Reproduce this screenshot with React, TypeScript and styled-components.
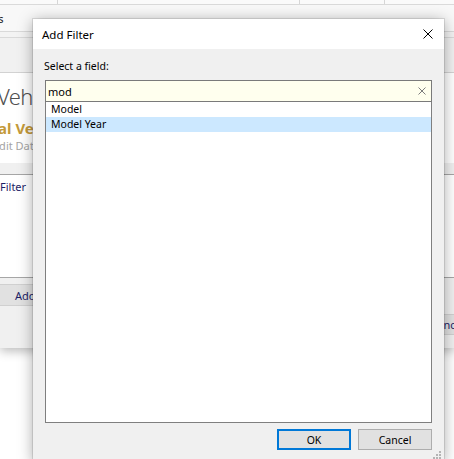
import React from 'react';
import styled, { createGlobalStyle } from 'styled-components';

const GlobalStyle = createGlobalStyle`
  html, body {
    margin: 0;
    padding: 0;
    background: #ffffff;
  }
  body {
    font-family: "Noto Sans", "Open Sans", sans-serif;
    color: #000000;
  }
`;

const Desktop = styled.div`
  position: relative;
  width: 454px;
  height: 459px;
  overflow: hidden;
  background: #ffffff;
`;

/* the window that sits behind the dialog */
const BackWindow = styled.div`
  position: absolute;
  left: 0;
  top: 0;
  width: 454px;
  height: 348px;
  display: flex;
  flex-direction: column;
  background: #f0f0f0;
  box-shadow: 0 3px 10px rgba(0, 0, 0, 0.28);
`;

const HeaderStrip = styled.div`
  height: 4px;
  flex: none;
  display: grid;
  grid-template-columns: 58px 242px 85px 1fr;
  background: #fafafa;
  border-bottom: 1px solid #dadada;
`;

const HeaderCell = styled.div`
  border-right: 1px solid #d6d6d6;
  &:last-child {
    border-right: none;
  }
`;

const Toolbar = styled.div`
  height: 26px;
  flex: none;
  display: flex;
  align-items: center;
  background: #f8f8f8;
  border-bottom: 1px solid #d9d9d9;
  font-size: 11px;
  color: #222;
`;

const Shift = styled.span<{ $by: number }>`
  margin-left: ${p => p.$by}px;
  white-space: nowrap;
`;

const SubBar = styled.div`
  height: 5px;
  flex: none;
  background: #f3f3f3;
  border-bottom: 1px solid #d9d9d9;
`;

const Ribbon = styled.div`
  height: 34px;
  flex: none;
  background: #f1f1f1;
  border-bottom: 1px solid #d2d2d2;
`;

const Content = styled.div`
  height: 90px;
  flex: none;
  box-sizing: border-box;
  padding-top: 9px;
  display: flex;
  flex-direction: column;
  background: #ffffff;
  white-space: nowrap;
`;

const PageTitle = styled.div`
  font-size: 22px;
  line-height: 28px;
  font-weight: 300;
  letter-spacing: -0.6px;
  color: #505050;
`;

const SectionTitle = styled.div`
  margin-top: 8px;
  font-size: 15px;
  line-height: 20px;
  font-weight: 700;
  color: #c49a3a;
`;

const Hint = styled.div`
  font-size: 11px;
  line-height: 15px;
  color: #a4a4a4;
`;

const GridHeader = styled.div`
  height: 11px;
  flex: none;
  background: #f0f0f0;
  border-bottom: 1px solid #a6a6a6;
`;

const FilterArea = styled.div`
  height: 103px;
  flex: none;
  box-sizing: border-box;
  padding-top: 4px;
  background: #ffffff;
  border-bottom: 1px solid #a6a6a6;
  font-size: 11px;
  line-height: 15px;
  color: #1d1d66;
`;

const Footer = styled.div`
  flex: 1;
  display: flex;
  justify-content: space-between;
  align-items: flex-start;
  background: #f0f0f0;
`;

const BackButton = styled.div<{ $top: number; $edge: number; $tall: number; $textStart?: number }>`
  margin-top: ${p => p.$top}px;
  margin-left: ${p => (p.$edge < 0 ? p.$edge : 0)}px;
  margin-right: ${p => (p.$edge > 0 ? -p.$edge : 0)}px;
  width: 75px;
  height: ${p => p.$tall}px;
  box-sizing: border-box;
  display: flex;
  align-items: center;
  justify-content: ${p => (p.$textStart !== undefined ? 'flex-start' : 'center')};
  padding-left: ${p => p.$textStart ?? 0}px;
  background: #e1e1e1;
  border-top: 1px solid #d0d0d0;
  border-bottom: 1px solid #d0d0d0;
  font-size: 11px;
  color: #1d1d66;
  white-space: nowrap;
`;

/* Add Filter dialog */
const Dialog = styled.div`
  position: absolute;
  left: 33px;
  top: 19px;
  width: 411px;
  height: 443px;
  display: flex;
  flex-direction: column;
  background: #f0f0f0;
  box-shadow: 0 0 0 1px rgba(0, 0, 0, 0.1), 0 2px 14px rgba(0, 0, 0, 0.34);
`;

const TitleBar = styled.div`
  height: 30px;
  flex: none;
  display: flex;
  align-items: center;
  justify-content: space-between;
  padding: 0 11px 0 9px;
  background: #ffffff;
  font-size: 11.5px;
  color: #000000;
`;

const CloseGlyph = styled.svg`
  display: block;
  width: 10px;
  height: 10px;
`;

const Body = styled.div`
  flex: 1;
  display: flex;
  flex-direction: column;
  padding: 10px 12px 12px 12px;
  font-size: 10.5px;
`;

const FieldLabel = styled.div`
  line-height: 15px;
  margin-left: -1px;
`;

const SearchBox = styled.div`
  margin-top: 6px;
  height: 22px;
  flex: none;
  box-sizing: border-box;
  display: flex;
  align-items: center;
  justify-content: space-between;
  padding: 0 5px 0 2px;
  background: #ffffee;
  border: 1px solid #7a7a7a;
  font-size: 11px;
`;

const ClearGlyph = styled.svg`
  display: block;
  width: 8px;
  height: 8px;
`;

const FieldList = styled.div`
  height: 321px;
  flex: none;
  box-sizing: border-box;
  background: #ffffff;
  border: 1px solid #7f7f7f;
  border-top: none;
`;

const FieldItem = styled.div<{ $selected?: boolean }>`
  height: 15px;
  line-height: 15px;
  padding-left: 5px;
  background: ${p => (p.$selected ? '#cce8ff' : 'transparent')};
`;

const ButtonRow = styled.div`
  margin-top: 6px;
  display: flex;
  justify-content: flex-end;
  gap: 7px;
`;

const DialogButton = styled.div<{ $default?: boolean }>`
  width: 74px;
  height: 21px;
  box-sizing: border-box;
  display: flex;
  align-items: center;
  justify-content: center;
  background: #e1e1e1;
  border: ${p => (p.$default ? '2px solid #0078d7' : '1px solid #adadad')};
  font-size: 10.5px;
`;

const Grip = styled.svg`
  position: absolute;
  right: 3px;
  bottom: 3px;
  width: 9px;
  height: 9px;
`;

const fields = [
  { name: 'Model', selected: false },
  { name: 'Model Year', selected: true },
];

export default function App() {
  return (
    <>
      <GlobalStyle />
      <Desktop>
        <BackWindow>
          <HeaderStrip>
            <HeaderCell />
            <HeaderCell />
            <HeaderCell />
            <HeaderCell />
          </HeaderStrip>
          <Toolbar>
            <Shift $by={-26}>Items</Shift>
          </Toolbar>
          <SubBar />
          <Ribbon />
          <Content>
            <PageTitle>
              <Shift $by={-3}>Vehicles</Shift>
            </PageTitle>
            <SectionTitle>
              <Shift $by={-37}>Rental Vehicles</Shift>
            </SectionTitle>
            <Hint>
              <Shift $by={-7}>Edit Data</Shift>
            </Hint>
          </Content>
          <GridHeader />
          <FilterArea>Filter</FilterArea>
          <Footer>
            <BackButton $top={6} $edge={-20} $tall={22} $textStart={35}>
              Add Filter
            </BackButton>
            <BackButton $top={36} $edge={31} $tall={21}>
              Cancel
            </BackButton>
          </Footer>
        </BackWindow>

        <Dialog>
          <TitleBar>
            <span>Add Filter</span>
            <CloseGlyph viewBox="0 0 10 10">
              <path d="M0.5 0.5 L9.5 9.5 M9.5 0.5 L0.5 9.5" stroke="#000" strokeWidth="1" fill="none" />
            </CloseGlyph>
          </TitleBar>
          <Body>
            <FieldLabel>Select a field:</FieldLabel>
            <SearchBox>
              <span>mod</span>
              <ClearGlyph viewBox="0 0 8 8">
                <path d="M0.5 0.5 L7.5 7.5 M7.5 0.5 L0.5 7.5" stroke="#7d7d7d" strokeWidth="1" fill="none" />
              </ClearGlyph>
            </SearchBox>
            <FieldList>
              {fields.map(f => (
                <FieldItem key={f.name} $selected={f.selected}>
                  {f.name}
                </FieldItem>
              ))}
            </FieldList>
            <ButtonRow>
              <DialogButton $default>OK</DialogButton>
              <DialogButton>Cancel</DialogButton>
            </ButtonRow>
          </Body>
          <Grip viewBox="0 0 9 9">
            <rect x="7" y="1" width="2" height="2" fill="#b4b4b4" />
            <rect x="4" y="4" width="2" height="2" fill="#b4b4b4" />
            <rect x="7" y="4" width="2" height="2" fill="#b4b4b4" />
            <rect x="1" y="7" width="2" height="2" fill="#b4b4b4" />
            <rect x="4" y="7" width="2" height="2" fill="#b4b4b4" />
            <rect x="7" y="7" width="2" height="2" fill="#b4b4b4" />
          </Grip>
        </Dialog>
      </Desktop>
    </>
  );
}
